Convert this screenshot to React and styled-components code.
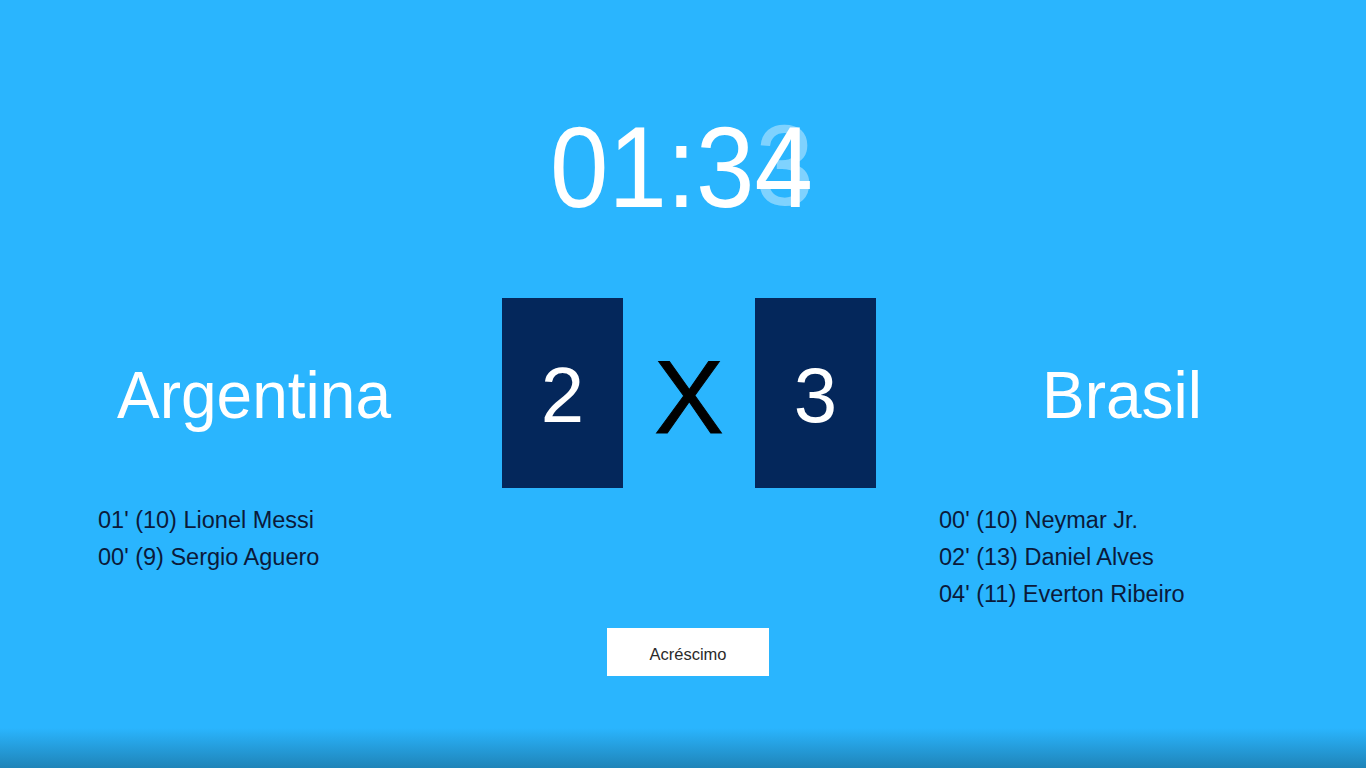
import React from 'react';
import styled, { createGlobalStyle } from 'styled-components';

const GlobalStyle = createGlobalStyle`
  * { box-sizing: border-box; }
  html, body { margin: 0; padding: 0; }
  body {
    font-family: 'Liberation Sans', Arial, sans-serif;
    overflow: hidden;
  }
`;

const Screen = styled.div`
  width: 100vw;
  height: 100vh;
  background: linear-gradient(
    to bottom,
    #2ab5fe 0,
    #2ab5fe 728px,
    #1f84b8 768px
  );
  display: flex;
  flex-direction: column;
`;

const Clock = styled.div`
  margin-top: 104px;
  padding-left: 550px;
  display: flex;
  color: #fff;
  font-size: 105px;
  line-height: 116px;
  height: 124px;
  transform: scaleY(1.1);
  transform-origin: top;
`;

const Digit = styled.span`
  position: relative;
  display: inline-block;
`;

const Ghost = styled.span`
  position: absolute;
  left: 1px;
  top: -2px;
  color: rgba(255, 255, 255, 0.4);
`;

const Board = styled.div`
  margin-top: 70px;
  display: grid;
  grid-template-columns: 502px 374px 1fr;
  grid-template-rows: 190px auto auto;
`;

const TeamName = styled.div`
  display: flex;
  align-items: center;
  justify-content: center;
  color: #fff;
  font-size: 64px;
  padding-left: ${(p) => p.$shift || 0}px;
  padding-top: 4px;
  transform: scaleY(1.05);
`;

const Score = styled.div`
  display: flex;
  justify-content: space-between;
  align-items: center;
`;

const ScoreBox = styled.div`
  width: 121px;
  height: 190px;
  background: #04275b;
  color: #fff;
  font-size: 78px;
  display: flex;
  align-items: center;
  justify-content: center;
  padding-top: 4px;
`;

const Versus = styled.div`
  color: #000;
  font-size: 104px;
  line-height: 1;
  padding-top: 8px;
  -webkit-text-stroke: 1px #000;
`;

const Goals = styled.ul`
  list-style: none;
  margin: 14px 0 0;
  padding: 0 0 0 ${(p) => p.$left}px;
  grid-row: 2;
  grid-column: ${(p) => p.$col};
`;

const Goal = styled.li`
  color: #0b1a3a;
  font-size: 23.5px;
  line-height: 37px;
  white-space: nowrap;
`;

const Actions = styled.div`
  grid-row: 3;
  grid-column: 2;
  display: flex;
  justify-content: center;
  padding-right: 2px;
  margin-top: 15px;
`;

const Button = styled.button`
  width: 162px;
  height: 48px;
  padding: 4px 0 0;
  background: #fff;
  border: none;
  font-family: 'Liberation Sans', Arial, sans-serif;
  font-size: 16.5px;
  color: #2a2a2a;
  cursor: pointer;
`;

const home = {
  name: 'Argentina',
  score: 2,
  goals: ["01' (10) Lionel Messi", "00' (9) Sergio Aguero"],
};

const away = {
  name: 'Brasil',
  score: 3,
  goals: ["00' (10) Neymar Jr.", "02' (13) Daniel Alves", "04' (11) Everton Ribeiro"],
};

export default function App() {
  return (
    <>
      <GlobalStyle />
      <Screen>
        <Clock>
          <span>01:3</span>
          <Digit>
            4<Ghost>3</Ghost>
          </Digit>
        </Clock>
        <Board>
          <TeamName $shift={6}>{home.name}</TeamName>
          <Score>
            <ScoreBox>{home.score}</ScoreBox>
            <Versus>X</Versus>
            <ScoreBox>{away.score}</ScoreBox>
          </Score>
          <TeamName $shift={2}>{away.name}</TeamName>
          <Goals $col={1} $left={98}>
            {home.goals.map((g) => (
              <Goal key={g}>{g}</Goal>
            ))}
          </Goals>
          <Goals $col={3} $left={63}>
            {away.goals.map((g) => (
              <Goal key={g}>{g}</Goal>
            ))}
          </Goals>
          <Actions>
            <Button>Acréscimo</Button>
          </Actions>
        </Board>
      </Screen>
    </>
  );
}
